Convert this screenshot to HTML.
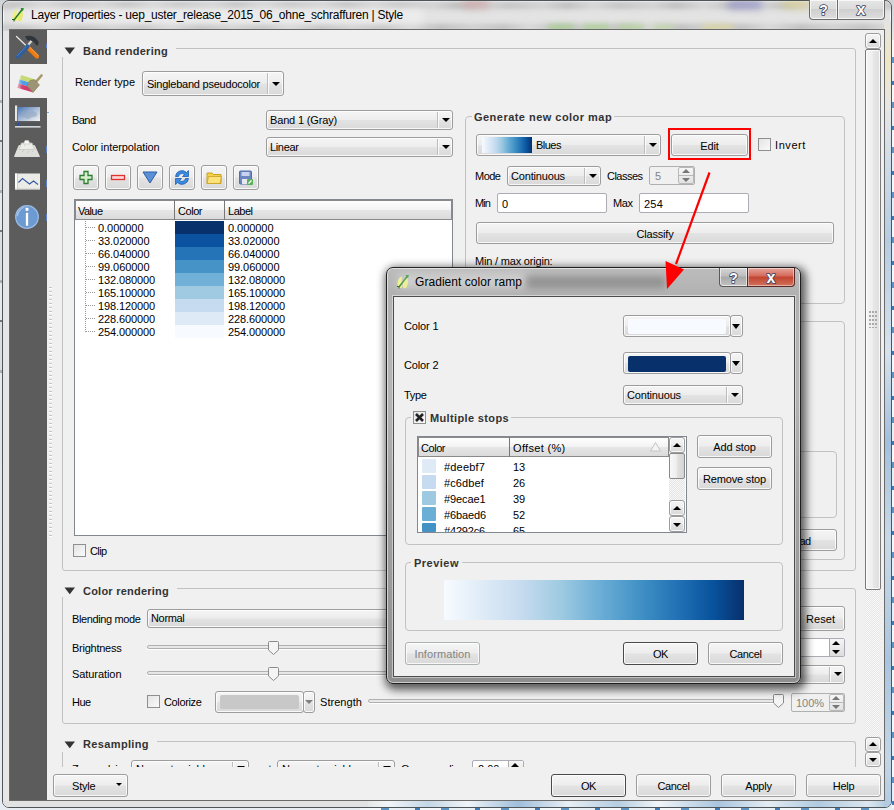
<!DOCTYPE html>
<html><head><meta charset="utf-8"><title>Layer Properties</title>
<style>
*{box-sizing:border-box;margin:0;padding:0}
html,body{width:894px;height:810px;overflow:hidden;background:#dfe6ec;font-family:"Liberation Sans",sans-serif;font-size:11px;color:#000}
.a{position:absolute}
.t{position:absolute;white-space:nowrap;line-height:14px;height:14px}
.b{font-weight:bold;color:#333;letter-spacing:.45px}
.btn{position:absolute;border:1px solid #9c9c9c;border-radius:3px;background:linear-gradient(#f5f5f5 0%,#ededed 48%,#e3e3e3 52%,#d9d9d9 100%);box-shadow:inset 0 0 0 1px rgba(255,255,255,.8);text-align:center;white-space:nowrap}
.btn.def{border-color:#4a4a4a}
.btn.dis{color:#838383;border-color:#adb2b5}
.grp{position:absolute;border:1px solid #c2c2c2;border-radius:4px}
.edit{position:absolute;background:#fff;border:1px solid #abadb3;border-radius:2px}
.chk{position:absolute;width:13px;height:13px;border:1px solid #8e8f8f;background:linear-gradient(135deg,#e4e4e4,#fafafa)}
.div{position:absolute;top:1px;bottom:1px;width:1px;background:#bcbcbc;box-shadow:1px 0 0 rgba(255,255,255,.8)}
.arr{position:absolute;width:0;height:0;border-left:4px solid transparent;border-right:4px solid transparent;border-top:4px solid #000}
.arru{position:absolute;width:0;height:0;border-left:4px solid transparent;border-right:4px solid transparent;border-bottom:4px solid #000}
.sl{border:1px solid #b0b0b0;border-radius:2px;background:#e8e8e8;box-shadow:0 1px 0 #fff}
</style></head><body>
<!-- desktop background -->
<div class="a" id="desk" style="left:0;top:0;width:894px;height:810px;background:linear-gradient(#cfd3d6,#e4e6e8 40px,#dfe3e6 300px,#e6ecf2)"></div>
<div class="a" style="left:0;top:100px;width:2px;height:300px;background:repeating-linear-gradient(#b0b0b0 0 3px,#e8e8e8 3px 40px,#777 40px 42px,#ddd 42px 90px)"></div>
<div class="a" style="left:892px;top:40px;width:2px;height:770px;background:repeating-linear-gradient(#f4f8fb 0 17px,#5f93c4 17px 23px,#e8f0f6 23px 41px,#3f7ab5 41px 45px)"></div>
<div class="a" style="left:360px;top:808px;width:534px;height:2px;background:repeating-linear-gradient(90deg,#f4f8fb 0 21px,#5f93c4 21px 29px,#e8f0f6 29px 55px,#3f7ab5 55px 60px)"></div>

<!-- main window -->
<div class="a" id="win" style="left:2px;top:0px;width:890px;height:808px;border:1px solid #50555a;border-radius:7px;overflow:hidden;background:#e3e3e3;box-shadow:inset 0 0 0 1px rgba(255,255,255,.75)">
 <div class="a" style="left:-10px;top:1px;width:910px;height:7px;background:repeating-linear-gradient(90deg,#d2d2d2 0,#bcbcbc 24px,#d6d6d6 50px,#c2c2c2 76px,#d2d2d2 110px);filter:blur(2.500px)"></div>
 <div class="a" style="left:-10px;top:23px;width:910px;height:7px;background:repeating-linear-gradient(90deg,#d0d0d0 0,#c0c0c0 30px,#d8d8d8 56px,#bebebe 88px,#d0d0d0 120px);filter:blur(2.500px)"></div>
 <div class="a" style="left:10px;top:8px;width:410px;height:14px;background:#ececec;filter:blur(4px)"></div>
 <div class="a" style="left:460px;top:0px;width:26px;height:6px;background:#c89a9a;filter:blur(4px)"></div>
 <div class="a" style="left:725px;top:0px;width:34px;height:7px;background:#8f8fc6;filter:blur(4px)"></div>
 <div class="a" style="left:780px;top:0px;width:26px;height:6px;background:#e0d48a;filter:blur(4px)"></div>
 <div class="a" style="left:545px;top:24px;width:26px;height:6px;background:#a8d090;filter:blur(3px)"></div>
 <div class="a" style="left:580px;top:24px;width:26px;height:6px;background:#a8d090;filter:blur(3px)"></div>
 <div class="a" style="left:615px;top:24px;width:26px;height:6px;background:#b4d49c;filter:blur(3px)"></div>
 <div class="a" style="left:650px;top:24px;width:20px;height:6px;background:#c0d8a8;filter:blur(3px)"></div>
 <div class="a" style="left:700px;top:24px;width:30px;height:6px;background:#dcd49c;filter:blur(3px)"></div>
 <div class="a" style="left:0;top:30px;width:8px;height:780px;background:#e6e6e6"></div>
 <div class="a" style="left:0;top:800px;width:365px;height:8px;background:#e2e2e2"></div>
 <div class="a" style="left:365px;top:800px;width:525px;height:8px;background:linear-gradient(90deg,#e6e6e6,#f2f5f8 20px,#c4d6e6 60px,#f0f4f8 100px,#9fbedb 150px,#e8eef4 200px,#b5cde2 250px,#f2f5f8 290px,#a9c5de 350px,#e4ecf3 400px,#b0cae0 450px,#dce7f0 500px,#a4c2dc)"></div>
 <div class="a" style="left:881px;top:20px;width:9px;height:790px;background:linear-gradient(#e4e4e4,#efe6c4 40px,#e6e6e6 90px,#cfdce8 140px,#b4cce2 220px,#d6e2ee 330px,#a2c0dc 420px,#c8dae9 520px,#a9c5de 640px,#c2d6e8 740px,#b0cae0)"></div>
</div>
<div class="a" id="content" style="left:10px;top:30px;width:874px;height:770px;background:#f0f0f0;box-shadow:0 0 0 1px #6a6a6a"></div>

<!-- sidebar -->
<div class="a" id="side" style="left:10px;top:30px;width:37px;height:770px;background:#5c5c5c"></div>
<div class="a" style="left:10px;top:64px;width:37px;height:34px;background:#f0f0f0"></div>


<!-- ===== main content ===== -->
<div class="a" id="main" style="left:0;top:0;width:894px;height:810px">
<!-- splitter dots -->
<div class="a" style="left:49px;top:285px;width:3px;height:254px;background:repeating-linear-gradient(#f0f0f0 0 2px,#c8c8c8 2px 3px,#fff 3px 4px)"></div>

<!-- Band rendering group -->
<div class="a" style="left:62px;top:48px;width:794px;height:523px;border:1px solid #c2c2c2;border-radius:0 3px 3px 3px"></div>
<div class="a" style="left:55px;top:40px;width:121px;height:17px;background:#f0f0f0"></div>
<svg class="a" style="left:64px;top:47px" width="12" height="8"><path d="M0.5 0.5h10.5l-5.25 6.8z" fill="#333"></path></svg>
<div class="t b" style="left: 83px; top: 44px; letter-spacing: 0.26px;">Band rendering</div>

<div class="t" style="left: 75px; top: 75px; letter-spacing: 0.01px;">Render type</div>
<div class="btn" style="left: 142px; top: 71px; width: 142px; height: 25px; text-align: left; padding: 5px 0px 0px 4px; line-height: 14px; letter-spacing: -0.23px;">Singleband pseudocolor<div class="div" style="left:124px"></div><div class="arr" style="left:129px;top:10px"></div></div>

<div class="t" style="left: 72px; top: 113px; letter-spacing: -0.55px;">Band</div>
<div class="btn" style="left: 266px; top: 110px; width: 187px; height: 20px; text-align: left; padding: 2px 0px 0px 3px; line-height: 14px; letter-spacing: -0.16px;">Band 1 (Gray)<div class="div" style="left:170px"></div><div class="arr" style="left:175px;top:7px"></div></div>
<div class="t" style="left: 72px; top: 140px; letter-spacing: -0.09px;">Color interpolation</div>
<div class="btn" style="left: 266px; top: 137px; width: 187px; height: 20px; text-align: left; padding: 2px 0px 0px 3px; line-height: 14px; letter-spacing: -0.35px;">Linear<div class="div" style="left:170px"></div><div class="arr" style="left:175px;top:7px"></div></div>

<!-- tool buttons -->
<div class="btn" style="left:73px;top:165px;width:26px;height:25px"><svg width="24" height="23" viewBox="0 0 24 23"><path d="M10 5.5h4v4h4v4h-4v4h-4v-4h-4v-4h4z" fill="#d8f0d0" stroke="#2e7d32" stroke-width="1.3"></path></svg></div>
<div class="btn" style="left:105px;top:165px;width:26px;height:25px"><svg width="24" height="23" viewBox="0 0 24 23"><rect x="5.5" y="9.5" width="13" height="4" fill="#ffd6d6" stroke="#e03030" stroke-width="1.3"></rect></svg></div>
<div class="btn" style="left:137px;top:165px;width:26px;height:25px"><svg width="24" height="23" viewBox="0 0 24 23"><path d="M5 6h14l-7 11z" fill="#5b8fd6" stroke="#2b5fa8" stroke-width="1"></path></svg></div>
<div class="btn" style="left:169px;top:165px;width:26px;height:25px"><svg width="24" height="23" viewBox="0 0 24 23"><path d="M5.5 10.5a6.5 6.5 0 0 1 11-4l2-2v6h-6l2-2a3.6 3.6 0 0 0-6 2z" fill="#3b8be0" stroke="#1f5fb0" stroke-width=".8"></path><path d="M18.500 12.500a6.500 6.500 0 0 1-11 4l-2 2v-6h6l-2 2a3.600 3.600 0 0 0 6-2z" fill="#3b8be0" stroke="#1f5fb0" stroke-width=".8"></path></svg></div>
<div class="btn" style="left:201px;top:165px;width:26px;height:25px"><svg width="24" height="23" viewBox="0 0 24 23"><path d="M5 7h5l1.500 1.500h7.500v9h-14z" fill="#f5d04a" stroke="#c9a020" stroke-width="1"></path><path d="M5 17.500l1.500-7h13l-1.500 7z" fill="#fbe27a" stroke="#c9a020" stroke-width=".8"></path></svg></div>
<div class="btn" style="left:233px;top:165px;width:26px;height:25px"><svg width="24" height="23" viewBox="0 0 24 23"><rect x="5.500" y="5" width="12" height="13" rx="1" fill="#6b86c0" stroke="#5070b0"></rect><rect x="7.500" y="6" width="8" height="4" fill="#c8d4ee"></rect><rect x="8" y="13" width="6" height="5" fill="#e8e8f0"></rect><rect x="13" y="13" width="6" height="6" rx="1" fill="#58b058"></rect><path d="M14.500 17.500l3-3" stroke="#fff" stroke-width="1.200"></path></svg></div>

<!-- table -->
<div class="a" style="left:74px;top:199px;width:379px;height:337px;background:#fff;border:1px solid #828790"></div>
<div class="a" style="left:75px;top:200px;width:377px;height:20px;background:linear-gradient(#fefefe,#f3f3f3 50%,#e6e6e6 52%,#dadada);border:1px solid #8a8a8a"></div>
<div class="a" style="left:174px;top:200px;width:1px;height:20px;background:#777"></div>
<div class="a" style="left:224px;top:200px;width:1px;height:20px;background:#777"></div>
<div class="t" style="left: 78px; top: 204px; letter-spacing: -0.57px;">Value</div>
<div class="t" style="left: 178px; top: 204px; letter-spacing: -0.46px;">Color</div>
<div class="t" style="left: 228px; top: 204px; letter-spacing: -0.48px;">Label</div>
<div class="a" style="left:175px;top:221px;width:49px;height:13px;background:#08306b"></div><div class="t" style="left: 98px; top: 222px; line-height: 13px; height: 13px; letter-spacing: -0.05px;">0.000000</div><div class="t" style="left: 228px; top: 222px; line-height: 13px; height: 13px; letter-spacing: -0.05px;">0.000000</div><div class="a" style="left:86px;top:227px;width:9px;height:1px;background:repeating-linear-gradient(90deg,#999 0 1px,#fff 1px 2px)"></div>
<div class="a" style="left:175px;top:234px;width:49px;height:13px;background:#0b52a0"></div><div class="t" style="left: 98px; top: 235px; line-height: 13px; height: 13px; letter-spacing: -0.06px;">33.020000</div><div class="t" style="left: 228px; top: 235px; line-height: 13px; height: 13px; letter-spacing: -0.06px;">33.020000</div><div class="a" style="left:86px;top:240px;width:9px;height:1px;background:repeating-linear-gradient(90deg,#999 0 1px,#fff 1px 2px)"></div>
<div class="a" style="left:175px;top:247px;width:49px;height:13px;background:#2474b7"></div><div class="t" style="left: 98px; top: 248px; line-height: 13px; height: 13px; letter-spacing: -0.06px;">66.040000</div><div class="t" style="left: 228px; top: 248px; line-height: 13px; height: 13px; letter-spacing: -0.06px;">66.040000</div><div class="a" style="left:86px;top:253px;width:9px;height:1px;background:repeating-linear-gradient(90deg,#999 0 1px,#fff 1px 2px)"></div>
<div class="a" style="left:175px;top:260px;width:49px;height:13px;background:#4694c7"></div><div class="t" style="left: 98px; top: 261px; line-height: 13px; height: 13px; letter-spacing: -0.06px;">99.060000</div><div class="t" style="left: 228px; top: 261px; line-height: 13px; height: 13px; letter-spacing: -0.06px;">99.060000</div><div class="a" style="left:86px;top:266px;width:9px;height:1px;background:repeating-linear-gradient(90deg,#999 0 1px,#fff 1px 2px)"></div>
<div class="a" style="left:175px;top:273px;width:49px;height:13px;background:#72b1d7"></div><div class="t" style="left: 98px; top: 274px; line-height: 13px; height: 13px; letter-spacing: -0.11px;">132.080000</div><div class="t" style="left: 228px; top: 274px; line-height: 13px; height: 13px; letter-spacing: -0.11px;">132.080000</div><div class="a" style="left:86px;top:279px;width:9px;height:1px;background:repeating-linear-gradient(90deg,#999 0 1px,#fff 1px 2px)"></div>
<div class="a" style="left:175px;top:286px;width:49px;height:13px;background:#9fcae1"></div><div class="t" style="left: 98px; top: 287px; line-height: 13px; height: 13px; letter-spacing: -0.11px;">165.100000</div><div class="t" style="left: 228px; top: 287px; line-height: 13px; height: 13px; letter-spacing: -0.11px;">165.100000</div><div class="a" style="left:86px;top:292px;width:9px;height:1px;background:repeating-linear-gradient(90deg,#999 0 1px,#fff 1px 2px)"></div>
<div class="a" style="left:175px;top:299px;width:49px;height:13px;background:#c6dbef"></div><div class="t" style="left: 98px; top: 300px; line-height: 13px; height: 13px; letter-spacing: -0.11px;">198.120000</div><div class="t" style="left: 228px; top: 300px; line-height: 13px; height: 13px; letter-spacing: -0.11px;">198.120000</div><div class="a" style="left:86px;top:305px;width:9px;height:1px;background:repeating-linear-gradient(90deg,#999 0 1px,#fff 1px 2px)"></div>
<div class="a" style="left:175px;top:312px;width:49px;height:13px;background:#deebf7"></div><div class="t" style="left: 98px; top: 313px; line-height: 13px; height: 13px; letter-spacing: -0.11px;">228.600000</div><div class="t" style="left: 228px; top: 313px; line-height: 13px; height: 13px; letter-spacing: -0.11px;">228.600000</div><div class="a" style="left:86px;top:318px;width:9px;height:1px;background:repeating-linear-gradient(90deg,#999 0 1px,#fff 1px 2px)"></div>
<div class="a" style="left:175px;top:325px;width:49px;height:13px;background:#f7fbff"></div><div class="t" style="left: 98px; top: 326px; line-height: 13px; height: 13px; letter-spacing: -0.11px;">254.000000</div><div class="t" style="left: 228px; top: 326px; line-height: 13px; height: 13px; letter-spacing: -0.11px;">254.000000</div><div class="a" style="left:86px;top:331px;width:9px;height:1px;background:repeating-linear-gradient(90deg,#999 0 1px,#fff 1px 2px)"></div>
<div class="a" style="left:85px;top:221px;width:1px;height:111px;background:repeating-linear-gradient(#999 0 1px,#fff 1px 2px)"></div>
<div class="chk" style="left:73px;top:544px"></div>
<div class="t" style="left: 90px; top: 544px; letter-spacing: -0.61px;">Clip</div>
</div>


<!-- ===== right side: generate new color map ===== -->
<div class="a" id="right" style="left:0;top:0;width:894px;height:810px">
<div class="grp" style="left:465px;top:116px;width:380px;height:188px"></div>
<div class="a" style="left:472px;top:110px;width:142px;height:14px;background:#f0f0f0"></div>
<div class="t b" style="left: 474px; top: 110px; letter-spacing: 0.47px;">Generate new color map</div>
<div class="btn" style="left: 476px; top: 134px; width: 185px; height: 22px; text-align: left; line-height: 14px; padding: 3px 0px 0px 59px; letter-spacing: -0.51px;">Blues<div class="a" style="left:5px;top:2px;width:50px;height:16px;background:linear-gradient(90deg,#f7fbff,#deebf7 13%,#c6dbef 26%,#9ecae1 39%,#6baed6 52%,#4292c6 65%,#2171b5 78%,#08519c 90%,#08306b)"></div><div class="div" style="left:167px"></div><div class="arr" style="left:172px;top:8px"></div></div>
<div class="btn" style="left: 671px; top: 134px; width: 77px; height: 22px; line-height: 14px; padding-top: 4px; letter-spacing: -0.12px;">Edit</div>
<div class="a" style="left:668px;top:128px;width:83px;height:32px;border:2px solid #fe0000"></div>
<div class="chk" style="left:758px;top:138px"></div>
<div class="t" style="left: 775px; top: 138px; letter-spacing: 0.58px;">Invert</div>

<div class="t" style="left: 475px; top: 169px; letter-spacing: -0.51px;">Mode</div>
<div class="btn" style="left: 507px; top: 166px; width: 94px; height: 20px; text-align: left; padding: 2px 0px 0px 3px; line-height: 14px; letter-spacing: -0.17px;">Continuous<div class="div" style="left:76px"></div><div class="arr" style="left:81px;top:7px"></div></div>
<div class="t" style="left: 607px; top: 169px; letter-spacing: -0.52px;">Classes</div>
<div class="edit" style="left:649px;top:166px;width:46px;height:19px;background:#f0f0f0;border-color:#b0b0b0;color:#838383;padding:2px 0 0 5px;line-height:14px">5</div>
<div class="a" style="left:678px;top:167px;width:16px;height:17px;border:1px solid #b8b8b8;border-radius:2px;background:linear-gradient(#f6f6f6,#e2e2e2)"></div>
<div class="a" style="left:679px;top:175px;width:14px;height:1px;background:#b8b8b8"></div>
<div class="arru" style="left:682px;top:169px;border-bottom-color:#777"></div>
<div class="arr" style="left:682px;top:178px;border-top-color:#777"></div>

<div class="t" style="left: 475px; top: 196px; letter-spacing: -0.91px;">Min</div>
<div class="edit" style="left:497px;top:193px;width:110px;height:20px;padding:3px 0 0 4px;line-height:14px">0</div>
<div class="t" style="left: 613px; top: 196px; letter-spacing: -0.43px;">Max</div>
<div class="edit" style="left: 639px; top: 193px; width: 110px; height: 20px; padding: 3px 0px 0px 4px; line-height: 14px; letter-spacing: 0.21px;">254</div>
<div class="btn" style="left: 476px; top: 222px; width: 358px; height: 22px; line-height: 14px; padding-top: 4px; letter-spacing: -0.19px;">Classify</div>
<div class="t" style="left: 475px; top: 254px; letter-spacing: -0.19px;">Min / max origin:</div>

<!-- second group (load min/max) -->
<div class="grp" style="left:465px;top:321px;width:380px;height:239px"></div>
<div class="grp" style="left:700px;top:451px;width:137px;height:67px"></div>
<div class="btn" style="left: 762px; top: 529px; width: 75px; height: 22px; line-height: 14px; padding: 4px 0px 0px 0px; letter-spacing: -0.62px;">Load</div>
</div>

<!-- ===== color rendering ===== -->
<div class="a" id="cr" style="left:0;top:0;width:894px;height:810px">
<div class="a" style="left:62px;top:588px;width:794px;height:136px;border:1px solid #c2c2c2;border-radius:0 3px 3px 3px"></div>
<div class="a" style="left:55px;top:580px;width:122px;height:17px;background:#f0f0f0"></div>
<svg class="a" style="left:64px;top:587px" width="12" height="8"><path d="M0.5 0.5h10.5l-5.25 6.8z" fill="#333"></path></svg>
<div class="t b" style="left: 83px; top: 584px; letter-spacing: 0.23px;">Color rendering</div>
<div class="t" style="left: 72px; top: 612px; letter-spacing: -0.38px;">Blending mode</div>
<div class="btn" style="left: 147px; top: 609px; width: 600px; height: 19px; text-align: left; padding: 1px 0px 0px 3px; line-height: 14px; letter-spacing: -0.33px;">Normal</div>
<div class="btn" style="left: 770px; top: 606px; width: 75px; height: 25px; line-height: 14px; text-align:left; padding: 5px 0px 0px 35px; letter-spacing: 0.05px;">Reset</div>
<div class="t" style="left: 72px; top: 641px; letter-spacing: -0.25px;">Brightness</div>
<div class="a sl" style="left:147px;top:645px;width:650px;height:4px"></div>
<div class="t" style="left: 72px; top: 667px; letter-spacing: -0.07px;">Saturation</div>
<div class="a sl" style="left:147px;top:671px;width:650px;height:4px"></div>
<svg class="a" style="left:267px;top:640px" width="13" height="16"><path d="M1.500 2.500q0-1 1-1h8q1 0 1 1v7.500l-5 4.500l-5-4.500z" fill="#f4f4f4" stroke="#8a8a8a"></path></svg>
<svg class="a" style="left:267px;top:666px" width="13" height="16"><path d="M1.500 2.500q0-1 1-1h8q1 0 1 1v7.500l-5 4.500l-5-4.500z" fill="#f4f4f4" stroke="#8a8a8a"></path></svg>
<div class="edit" style="left:780px;top:638px;width:65px;height:19px"></div>
<div class="a" style="left:829px;top:639px;width:15px;height:17px;background:linear-gradient(#f6f6f6,#dcdcdc);border-left:1px solid #aaa"></div>
<div class="arru" style="left:832px;top:641px"></div><div class="arr" style="left:832px;top:650px"></div>
<div class="btn" style="left:780px;top:665px;width:65px;height:19px"><div class="div" style="left:48px"></div><div class="arr" style="left:53px;top:6px"></div></div>

<div class="t" style="left: 72px; top: 695px; letter-spacing: -0.56px;">Hue</div>
<div class="chk" style="left:147px;top:695px"></div>
<div class="t" style="left: 164px; top: 695px; letter-spacing: -0.36px;">Colorize</div>
<div class="btn" style="left:215px;top:691px;width:89px;height:22px"><div class="a" style="left:4px;top:3px;width:79px;height:14px;border-radius:2px;background:#c8c8c8"></div></div>
<div class="btn" style="left:303px;top:691px;width:12px;height:22px"><div class="arr" style="left:1px;top:8px;border-top-color:#808080"></div></div>
<div class="t" style="left: 320px; top: 695px; letter-spacing: 0.05px;">Strength</div>
<div class="a sl" style="left:368px;top:699px;width:412px;height:4px"></div>
<svg class="a" style="left:772px;top:693px" width="13" height="16"><path d="M1.500 2.500q0-1 1-1h8q1 0 1 1v7.500l-5 4.500l-5-4.500z" fill="#f4f4f4" stroke="#8a8a8a"></path></svg>
<div class="edit" style="left: 791px; top: 693px; width: 54px; height: 19px; background: rgb(240, 240, 240); border-color: rgb(176, 176, 176); color: rgb(131, 131, 131); padding: 2px 0px 0px 4px; line-height: 14px; letter-spacing: -0.04px;">100%</div>
<div class="a" style="left:829px;top:694px;width:15px;height:17px;border:1px solid #b8b8b8;border-radius:2px;background:linear-gradient(#f6f6f6,#e2e2e2)"></div>
<div class="a" style="left:830px;top:702px;width:13px;height:1px;background:#b8b8b8"></div>
<div class="arru" style="left:832px;top:696px;border-bottom-color:#777"></div><div class="arr" style="left:832px;top:705px;border-top-color:#777"></div>

<!-- Resampling -->
<div class="a" style="left:62px;top:741px;width:794px;height:40px;border:1px solid #c2c2c2;border-bottom:0;border-radius:0 3px 0 0"></div>
<div class="a" style="left:55px;top:734px;width:102px;height:18px;background:#f0f0f0"></div>
<svg class="a" style="left:64px;top:741px" width="12" height="8"><path d="M0.5 0.5h10.5l-5.25 6.8z" fill="#333"></path></svg>
<div class="t b" style="left: 83px; top: 737px; letter-spacing: 0.36px;">Resampling</div>
<div class="t" style="left: 72px; top: 762px; letter-spacing: -0.4px;">Zoomed: in</div>
<div class="btn" style="left: 131px; top: 760px; width: 118px; height: 20px; text-align: left; padding: 1px 0px 0px 4px; line-height: 14px; letter-spacing: -0.15px;">Nearest neighbour<div class="div" style="left:100px"></div><div class="arr" style="left:105px;top:5px"></div></div>
<div class="t" style="left: 256px; top: 762px; letter-spacing: 0.07px;">out</div>
<div class="btn" style="left: 277px; top: 760px; width: 118px; height: 20px; text-align: left; padding: 1px 0px 0px 4px; line-height: 14px; letter-spacing: -0.15px;">Nearest neighbour<div class="div" style="left:100px"></div><div class="arr" style="left:105px;top:5px"></div></div>
<div class="t" style="left: 401px; top: 762px; letter-spacing: -0.32px;">Oversampling</div>
<div class="edit" style="left:472px;top:760px;width:52px;height:20px;padding:1px 0 0 5px;line-height:14px">2.00</div>
<div class="a" style="left:508px;top:761px;width:15px;height:18px;background:linear-gradient(#f6f6f6,#dcdcdc);border-left:1px solid #aaa"></div>
<div class="arru" style="left:511px;top:763px"></div>

<!-- bottom bar -->
<div class="a" style="left:48px;top:767px;width:836px;height:33px;background:#f0f0f0"></div>
<div class="btn" style="left: 53px; top: 774px; width: 75px; height: 23px; line-height: 14px; padding: 4px 0px 0px 18px; text-align: left; letter-spacing: -0.19px;">Style<div class="arr" style="left:62px;top:8px;border-width:3px 3px 0 3px"></div></div>
<div class="btn def" style="left: 551px; top: 774px; width: 75px; height: 23px; line-height: 14px; padding-top: 4px; letter-spacing: -0.45px;">OK</div>
<div class="btn" style="left: 636px; top: 774px; width: 75px; height: 23px; line-height: 14px; padding-top: 4px; letter-spacing: -0.37px;">Cancel</div>
<div class="btn" style="left: 721px; top: 774px; width: 75px; height: 23px; line-height: 14px; padding-top: 4px; letter-spacing: -0.21px;">Apply</div>
<div class="btn" style="left: 806px; top: 774px; width: 75px; height: 23px; line-height: 14px; padding-top: 4px; letter-spacing: -0.28px;">Help</div>

<!-- main scrollbar -->
<div class="a" style="left:865px;top:33px;width:16px;height:734px;background:#f0f0f0 repeating-conic-gradient(#e6e6e6 0 25%,#f8f8f8 0 50%) 0 0/2px 2px"></div>
<div class="btn" style="left:865px;top:33px;width:16px;height:16px"><div class="arru" style="left:3px;top:5px"></div></div>
<div class="a" style="left:865px;top:49px;width:16px;height:541px;border:1px solid #7a7a7a;border-radius:2px;background:linear-gradient(90deg,#f6f6f6,#efefef 45%,#e6e6e6 55%,#dedede);box-shadow:inset 0 0 0 1px rgba(255,255,255,.8)"></div>
<div class="a" style="left:869px;top:311px;width:9px;height:17px;background:radial-gradient(circle at 1px 1px,#aaa 0.8px,transparent 1px) 0 0/3px 4px"></div>
<div class="btn" style="left:865px;top:737px;width:16px;height:15px"><div class="arru" style="left:3px;top:4px"></div></div>
<div class="btn" style="left:865px;top:752px;width:16px;height:15px"><div class="arr" style="left:3px;top:5px"></div></div>
</div>



<!-- ===== Gradient color ramp dialog ===== -->
<div class="a" id="dlg" style="left:386px;top:267px;width:415px;height:417px;border:1px solid #1e1e1e;border-radius:7px;background:linear-gradient(#bcbcbc,#b0b0b0 29px,#b4b4b4 60px,#b4b4b4 130px,#a2a2a2 230px,#9c9c9c 300px,#8e8e8e 420px);box-shadow:0 0 0 0 #000,2px 3px 9px 3px rgba(0,0,0,.62),inset 0 0 0 1px rgba(255,255,255,.55)"></div>
<div class="a" style="left:393px;top:296px;width:402px;height:381px;background:#f0f0f0;border:1px solid #4c4c4c;box-shadow:0 0 0 1px rgba(255,255,255,.45)"></div>
<svg class="a" style="left:396px;top:274px" width="14" height="16" viewBox="0 0 14 16"><path d="M2 12.500C0.500 8 3 3 6 2.500C5.500 6 5 10 6.500 13C5 14.500 3 14.500 2 12.500Z" fill="#eef07a"/><path d="M7 13.500C6 9 7.500 5 11 3C12.500 7 12 12 9.500 14.500Z" fill="#e6ea70"/><path d="M3 13L11.500 2" stroke="#1f7a1f" stroke-width="1.500"/><path d="M9.500 1l3.500.3-1.200 3z" fill="#1f8a1f"/><path d="M1 12.500h2v2" fill="none" stroke="#1f5a1f" stroke-width="1"/></svg><div class="a" style="left:398px;top:274px;width:130px;height:14px;background:rgba(255,255,255,.35);filter:blur(5px)"></div>
<div class="t" style="left: 415px; top: 275px; font-size: 12px; letter-spacing: 0.05px;">Gradient color ramp</div>
<div class="a" style="left:525px;top:276px;width:140px;height:12px;background:rgba(60,60,60,.28);filter:blur(3px)"></div>
<!-- caption buttons -->
<div class="a" style="left:719px;top:268px;width:29px;height:19px;border:1px solid #5a5a5a;border-top:0;border-radius:0 0 0 4px;background:linear-gradient(#d6d6d6,#bcbcbc 45%,#a8a8a8 50%,#c2c2c2);box-shadow:inset 0 0 0 1px rgba(255,255,255,.6);"><svg width="27" height="19" style="position:absolute;left:0;top:0"><text x="13.5" y="15" text-anchor="middle" font-family="Liberation Sans,sans-serif" font-weight="bold" font-size="14" fill="#fff" stroke="#3a4264" stroke-width="1.6" paint-order="stroke" stroke-linejoin="round">?</text></svg></div>
<div class="a" style="left:747px;top:268px;width:48px;height:19px;border:1px solid #5a2a2a;border-top:0;border-radius:0 0 4px 0;background:linear-gradient(#e6a59a,#d4695a 45%,#c1432f 50%,#d2735c);box-shadow:inset 0 0 0 1px rgba(255,255,255,.45);"><svg width="46" height="19" style="position:absolute;left:0;top:0"><text x="23.0" y="14.5" text-anchor="middle" font-family="Liberation Sans,sans-serif" font-weight="bold" font-size="16" fill="#fff" stroke="#3a4264" stroke-width="1.6" paint-order="stroke" stroke-linejoin="round">x</text></svg></div>

<div class="t" style="left: 404px; top: 319px; letter-spacing: -0.14px;">Color 1</div>
<div class="btn" style="left:623px;top:315px;width:108px;height:22px"><div class="a" style="left:4px;top:3px;width:98px;height:15px;border-radius:2px;background:#f7fbff"></div></div>
<div class="btn" style="left:730px;top:315px;width:13px;height:22px"><div class="arr" style="left:1px;top:8px;border-width:5px 4.500px 0 4.500px"></div></div>
<div class="t" style="left: 404px; top: 358px; letter-spacing: -0.14px;">Color 2</div>
<div class="btn" style="left:623px;top:352px;width:108px;height:22px"><div class="a" style="left:4px;top:3px;width:98px;height:16px;border-radius:2px;background:#08306b"></div></div>
<div class="btn" style="left:730px;top:352px;width:13px;height:22px"><div class="arr" style="left:1px;top:8px;border-width:5px 4.500px 0 4.500px"></div></div>
<div class="t" style="left: 404px; top: 388px; letter-spacing: -0.34px;">Type</div>
<div class="btn" style="left: 623px; top: 385px; width: 120px; height: 20px; text-align: left; padding: 2px 0px 0px 3px; line-height: 14px; letter-spacing: -0.17px;">Continuous<div class="div" style="left:102px"></div><div class="arr" style="left:107px;top:7px"></div></div>

<!-- multiple stops group -->
<div class="grp" style="left:405px;top:417px;width:378px;height:128px"></div>
<div class="a" style="left:411px;top:410px;width:100px;height:14px;background:#f0f0f0"></div>
<div class="chk" style="left:413px;top:411px;width:13px;height:13px"><svg width="11" height="11" style="position:absolute;left:0;top:0"><path d="M2 2l7 7M9 2l-7 7" stroke="#222" stroke-width="2.600"></path></svg></div>
<div class="t b" style="left: 430px; top: 411px; letter-spacing: 0.36px;">Multiple stops</div>

<div class="a" style="left:417px;top:436px;width:270px;height:97px;background:#fff;border:1px solid #828790"></div>
<div class="a" style="left:418px;top:437px;width:251px;height:20px;background:linear-gradient(#fefefe,#f3f3f3 50%,#e6e6e6 52%,#dadada);border:1px solid #8a8a8a"></div>
<div class="a" style="left:509px;top:437px;width:1px;height:20px;background:#777"></div>
<div class="t" style="left: 421px; top: 441px; letter-spacing: -0.46px;">Color</div>
<div class="t" style="left: 513px; top: 441px; letter-spacing: 0.32px;">Offset (%)</div>
<svg class="a" style="left:649px;top:441px" width="13" height="11"><path d="M6.500 1.500l5 8.500h-10z" fill="#f4f4f4" stroke="#c4c4c4"></path></svg>
<div class="a" style="left:422px;top:459px;width:14px;height:14px;background:#deebf7;border-radius:1px"></div><div class="t" style="left: 444px; top: 460px; letter-spacing: 0.18px;">#deebf7</div><div class="t" style="left:513px;top:460px">13</div>
<div class="a" style="left:422px;top:475px;width:14px;height:14px;background:#c6dbef;border-radius:1px"></div><div class="t" style="left: 444px; top: 476px; letter-spacing: 0.12px;">#c6dbef</div><div class="t" style="left:513px;top:476px">26</div>
<div class="a" style="left:422px;top:491px;width:14px;height:14px;background:#9ecae1;border-radius:1px"></div><div class="t" style="left: 444px; top: 492px; letter-spacing: -0.1px;">#9ecae1</div><div class="t" style="left:513px;top:492px">39</div>
<div class="a" style="left:422px;top:507px;width:14px;height:14px;background:#6baed6;border-radius:1px"></div><div class="t" style="left: 444px; top: 508px; letter-spacing: -0.12px;">#6baed6</div><div class="t" style="left:513px;top:508px">52</div>
<div class="a" style="left:422px;top:523px;width:14px;height:9px;background:#4292c6;border-radius:1px"></div><div class="a" style="left:440px;top:523px;width:120px;height:9px;overflow:hidden"><div class="t" style="left: 4px; top: 1px; letter-spacing: -0.17px;">#4292c6</div><div class="t" style="left:73px;top:1px">65</div></div>

<!-- stops scrollbar -->
<div class="a" style="left:669px;top:437px;width:16px;height:95px;background:#f0f0f0 repeating-conic-gradient(#e4e4e4 0 25%,#f8f8f8 0 50%) 0 0/2px 2px"></div>
<div class="btn" style="left:669px;top:437px;width:16px;height:16px"><div class="arru" style="left:3px;top:5px"></div></div>
<div class="a" style="left:669px;top:453px;width:16px;height:26px;border:1px solid #8a8a8a;border-radius:2px;background:linear-gradient(90deg,#f8f8f8,#eee 45%,#e0e0e0 55%,#d4d4d4)"></div>
<div class="btn" style="left:669px;top:500px;width:16px;height:16px"><div class="arru" style="left:3px;top:5px"></div></div>
<div class="btn" style="left:669px;top:516px;width:16px;height:16px"><div class="arr" style="left:3px;top:6px"></div></div>

<div class="btn" style="left: 697px; top: 435px; width: 75px; height: 23px; line-height: 14px; padding-top: 4px; letter-spacing: -0.12px;">Add stop</div>
<div class="btn" style="left: 697px; top: 467px; width: 75px; height: 23px; line-height: 14px; padding-top: 4px; letter-spacing: -0.16px;">Remove stop</div>

<!-- preview -->
<div class="grp" style="left:405px;top:562px;width:378px;height:69px"></div>
<div class="a" style="left:411px;top:556px;width:51px;height:14px;background:#f0f0f0"></div>
<div class="t b" style="left: 414px; top: 556px; letter-spacing: 0.49px;">Preview</div>
<div class="a" style="left:444px;top:580px;width:300px;height:40px;background:linear-gradient(90deg,#f7fbff,#deebf7 13%,#c6dbef 26%,#9ecae1 39%,#6baed6 52%,#4292c6 65%,#2171b5 78%,#08519c 90%,#08306b)"></div>

<div class="btn dis" style="left: 405px; top: 642px; width: 75px; height: 23px; line-height: 14px; padding-top: 4px; letter-spacing: 0.09px;">Information</div>
<div class="btn def" style="left: 623px; top: 642px; width: 75px; height: 23px; line-height: 14px; padding-top: 4px; letter-spacing: -0.45px;">OK</div>
<div class="btn" style="left: 708px; top: 642px; width: 75px; height: 23px; line-height: 14px; padding-top: 4px; letter-spacing: -0.37px;">Cancel</div>


<!-- ===== title bar ===== -->
<div class="a" id="title" style="left:0;top:0;width:894px;height:30px">
<svg class="a" style="left:11px;top:7px" width="14" height="16" viewBox="0 0 14 16"><path d="M2 12.500C0.500 8 3 3 6 2.500C5.500 6 5 10 6.500 13C5 14.500 3 14.500 2 12.500Z" fill="#eef07a"/><path d="M7 13.500C6 9 7.500 5 11 3C12.500 7 12 12 9.500 14.500Z" fill="#e6ea70"/><path d="M3 13L11.500 2" stroke="#1f7a1f" stroke-width="1.500"/><path d="M9.500 1l3.500.3-1.200 3z" fill="#1f8a1f"/><path d="M1 12.500h2v2" fill="none" stroke="#1f5a1f" stroke-width="1"/></svg>
<div class="t" style="left: 31px; top: 8px; font-size: 12px; letter-spacing: -0.23px;">Layer Properties - uep_uster_release_2015_06_ohne_schraffuren | Style</div>
<div class="a" style="left:809px;top:0;width:29px;height:20px;border:1px solid #6a6a6a;border-top:0;border-radius:0 0 0 4px;background:linear-gradient(#e6e6e6,#dcdcdc 45%,#cfcfcf 50%,#dedede);box-shadow:inset 0 0 0 1px rgba(255,255,255,.7);"><svg width="27" height="19" style="position:absolute;left:0;top:0"><text x="13.5" y="15" text-anchor="middle" font-family="Liberation Sans,sans-serif" font-weight="bold" font-size="14" fill="#fff" stroke="#3a4264" stroke-width="1.6" paint-order="stroke" stroke-linejoin="round">?</text></svg></div>
<div class="a" style="left:837px;top:0;width:48px;height:20px;border:1px solid #6a6a6a;border-top:0;border-radius:0 0 4px 0;background:linear-gradient(#e6e6e6,#dcdcdc 45%,#cfcfcf 50%,#dedede);box-shadow:inset 0 0 0 1px rgba(255,255,255,.7);"><svg width="46" height="19" style="position:absolute;left:0;top:0"><text x="23.0" y="14.5" text-anchor="middle" font-family="Liberation Sans,sans-serif" font-weight="bold" font-size="16" fill="#fff" stroke="#3a4264" stroke-width="1.6" paint-order="stroke" stroke-linejoin="round">x</text></svg></div>
</div>

<!-- ===== sidebar icons ===== -->
<div class="a" id="icons" style="left:0;top:0;width:60px;height:240px">
<!-- tools -->
<svg class="a" style="left:12px;top:32px" width="30" height="30" viewBox="0 0 30 30"><path d="M4.500 4.500L15 14.500" stroke="#e6e6e6" stroke-width="1.300" stroke-linecap="round"/><path d="M15.500 15L25 24.500" stroke="#ee7a12" stroke-width="4.200" stroke-linecap="round"/><path d="M16.300 13.700L26.300 23.700" stroke="#f9b060" stroke-width=".8"/><path d="M13 4.500c4.500-2 10-.5 13 4.500c1.200 2 .6 4.200-1.200 4.700l-2.300-2.700c-1.500-2-4-3-7-2.500z" fill="#30353a"/><path d="M19.500 9l-3.500 4" stroke="#d8d8d4" stroke-width="2.300"/><path d="M15.500 14.500L6 24.500" stroke="#2f5e9e" stroke-width="4.200" stroke-linecap="round"/><path d="M14.200 14.200L5 24" stroke="#5c86c0" stroke-width=".8"/></svg>
<!-- brush -->
<svg class="a" style="left:14px;top:70px" width="32" height="26" viewBox="0 0 32 26"><defs><linearGradient id="fd" x1="0" x2="1"><stop offset="0" stop-color="#f0f0f0" stop-opacity=".9"/><stop offset=".45" stop-color="#f0f0f0" stop-opacity="0"/></linearGradient></defs><path d="M7 5l16 5-1.500 4.200L5.500 9.500z" fill="#c6da74"/><path d="M5.500 9.500l16 4.700-1.300 4L4.500 13.700z" fill="#4f9de6"/><path d="M4.500 13.700l15.700 4.500-1.700 4L3 17.800z" fill="#d23c6e"/><path d="M2 4h14v20H2z" fill="url(#fd)"/><path d="M27.500 5.500L21 13" stroke="#a89868" stroke-width="2.600" stroke-linecap="round"/><path d="M16 10.500l4.500-.8 5 5.300-6.500 7.500-6-6.500z" fill="#9c9474" stroke="#857c5c" stroke-width=".6"/></svg>
<!-- monitor/world -->
<svg class="a" style="left:14px;top:104px" width="28" height="25" viewBox="0 0 28 25"><defs><linearGradient id="wm" x1="0" y1="0" x2="1" y2="1"><stop offset="0" stop-color="#4a74b4"/><stop offset=".5" stop-color="#a9bcd6"/><stop offset="1" stop-color="#f4f4f2"/></linearGradient></defs><rect x="1" y="1.500" width="2.200" height="15.500" fill="#e8e6e2"/><rect x="4" y="3" width="22" height="14" fill="url(#wm)"/><path d="M7 9c2-3 5-3 6-1s3-1 5-1 4 1 5 3-2 3-4 3-3 2-5 2-3-2-5-2-3-2-2-4z" fill="#8ea4c0" opacity=".55"/><rect x="1" y="18.500" width="25" height="3.500" fill="#505458"/><rect x="3" y="18.500" width="2.200" height="3.500" fill="#2850a8"/><rect x="1" y="22.200" width="25.500" height="1.300" fill="#f2f2f2"/></svg>
<!-- pyramids -->
<svg class="a" style="left:13px;top:138px" width="29" height="21" viewBox="0 0 29 21"><path d="M1.500 18.500L6 7.500h15.500l5 11z" fill="#dededa" stroke="#ecece8" stroke-width=".8"/><path d="M6 11.500L8.500 5h10.500l2.500 6.500z" fill="#ecece8" stroke="#c4c4c0" stroke-width=".7"/><path d="M10.500 6l1.500-3.500h3.500L17 6z" fill="#f8f8f6" stroke="#c4c4c0" stroke-width=".7"/><path d="M9 14l2-2m3 3l2-2m3 1l1-1m-9-6l1 1" stroke="#c0c0bc" stroke-width=".8"/></svg>
<!-- histogram -->
<svg class="a" style="left:14px;top:172px" width="28" height="20" viewBox="0 0 28 20"><rect x="1" y="1.500" width="25" height="16" fill="#ebebe8"/><rect x="1" y="1.500" width="2" height="16" fill="#fbfbfa"/><path d="M3.500 2v15M1 17h25" stroke="#c8c8c4" stroke-width=".8"/><path d="M4.500 10.500l4-4 7 5.500 4-3 4.500 3.500" fill="none" stroke="#3558a0" stroke-width="1.100"/></svg>
<!-- info -->
<svg class="a" style="left:14px;top:204px" width="27" height="27" viewBox="0 0 27 27"><circle cx="13" cy="13" r="11.300" fill="#6c9ad2" stroke="#9dbde6" stroke-width="1.200"/><path d="M2.500 12a10.500 10.500 0 0 1 10-9.500c-5 2-8 5-8.500 10z" fill="#b4cdee" opacity=".8"/><rect x="11.600" y="3.800" width="2.800" height="3" fill="#fff"/><rect x="11.600" y="8.500" width="2.800" height="13.500" fill="#fff" stroke="#5a82b8" stroke-width=".4"/></svg>
<div class="a" style="left:46px;top:146px;width:1px;height:7px;background:#5a7fd0"></div>
<div class="a" style="left:46px;top:180px;width:1px;height:7px;background:#5a7fd0"></div>
<div class="a" style="left:46px;top:214px;width:1px;height:7px;background:#5a7fd0"></div>
<div class="a" style="left:46px;top:44px;width:1px;height:4px;background:#5a7fd0"></div>
<div class="a" style="left:47px;top:112px;width:2px;height:1px;background:#6ab0f0"></div>
</div>

<!-- ===== red arrow ===== -->
<svg class="a" style="left:640px;top:160px" width="100" height="140"><line x1="69.5" y1="12.500" x2="36" y2="104" stroke="#fe0000" stroke-width="2.200"></line><path d="M27 129L25.500 101L44 109.500z" fill="#fe0000"></path></svg>


</body></html>
